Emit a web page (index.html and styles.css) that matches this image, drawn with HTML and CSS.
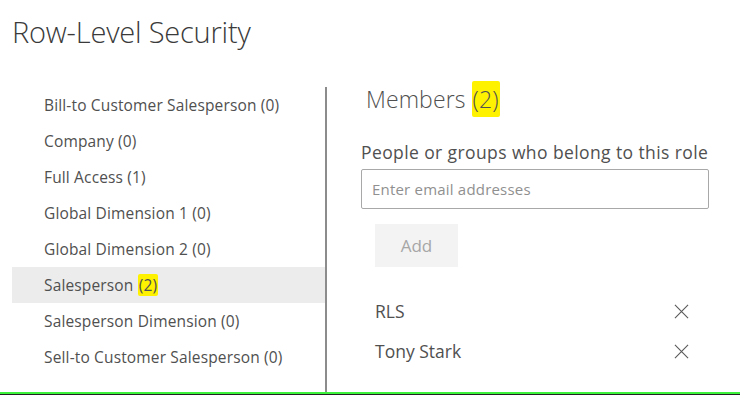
FILE: index.html
```html
<!DOCTYPE html>
<html lang="en">
<head>
<meta charset="utf-8">
<title>Row-Level Security</title>
<link rel="stylesheet" href="styles.css">
</head>
<body>
<header class="page-header">
  <h1 class="page-title">Row-Level Security</h1>
</header>
<main class="main">
  <nav class="roles">
    <ul class="role-list">
      <li class="role">Bill-to Customer Salesperson (0)</li>
      <li class="role">Company (0)</li>
      <li class="role">Full Access (1)</li>
      <li class="role">Global Dimension 1 (0)</li>
      <li class="role">Global Dimension 2 (0)</li>
      <li class="role role-selected">Salesperson <span class="hl">(2)</span></li>
      <li class="role">Salesperson Dimension (0)</li>
      <li class="role">Sell-to Customer Salesperson (0)</li>
    </ul>
  </nav>
  <section class="members">
    <h2 class="members-title">Members <span class="hl">(2)</span></h2>
    <label class="field-label" for="email">People or groups who belong to this role</label>
    <input class="email-input" id="email" type="text" placeholder="Enter email addresses">
    <button class="add-btn" type="button">Add</button>
    <ul class="member-list">
      <li class="member"><span class="member-name">RLS</span>
        <svg class="remove" viewBox="0 0 16 16" width="16" height="16"><path d="M1 1L15 15M15 1L1 15" stroke="#5a5a5a" stroke-width="1.2" fill="none"/></svg>
      </li>
      <li class="member"><span class="member-name">Tony Stark</span>
        <svg class="remove" viewBox="0 0 16 16" width="16" height="16"><path d="M1 1L15 15M15 1L1 15" stroke="#5a5a5a" stroke-width="1.2" fill="none"/></svg>
      </li>
    </ul>
  </section>
</main>
<footer class="bottom-bar"></footer>
</body>
</html>
```

FILE: styles.css
```css
html, body {
  margin: 0;
  padding: 0;
}
body {
  width: 740px;
  height: 395px;
  overflow: hidden;
  display: flex;
  flex-direction: column;
  background: #ffffff;
  font-family: "Open Sans", "Noto Sans", sans-serif;
  color: #4a4a4a;
}
.page-header {
  height: 87px;
  flex: none;
  padding-left: 12px;
  box-sizing: border-box;
  padding-top: 14px;
}
.page-title {
  margin: 0;
  font-size: 29px;
  font-weight: 300;
  line-height: 36px;
  color: #3a3a3a;
  letter-spacing: -0.2px;
}
.main {
  flex: 1;
  display: flex;
  min-height: 0;
}
.roles {
  margin-left: 12px;
  width: 313px;
  flex: none;
}
.role-list {
  list-style: none;
  margin: 0;
  padding: 0;
}
.role {
  height: 36px;
  line-height: 36px;
  padding-left: 32px;
  font-size: 15.5px;
  letter-spacing: 0.15px;
  color: #505050;
  white-space: nowrap;
}
.role-selected {
  background: #ececec;
}
.hl {
  background: #fff200;
  border-radius: 2px;
  padding: 0 1px;
}
.members {
  flex: 1;
  border-left: 2px solid #8c8c8c;
  padding-left: 34px;
  display: flex;
  flex-direction: column;
  align-items: flex-start;
}
.members-title {
  margin: 0 0 0 5px;
  font-size: 23px;
  font-weight: 300;
  line-height: 24px;
  color: #505050;
  letter-spacing: 0.1px;
}
.members-title .hl {
  padding: 2px 1px;
}
.field-label {
  margin-top: 30px;
  font-size: 17.5px;
  line-height: 22px;
  letter-spacing: 0.4px;
  color: #505050;
  white-space: nowrap;
}
.email-input {
  margin-top: 6px;
  width: 348px;
  height: 40px;
  box-sizing: border-box;
  border: 1px solid #a8a8a8;
  border-radius: 2px;
  padding: 0 10px;
  font-family: inherit;
  font-size: 15px;
  letter-spacing: 0.2px;
  color: #444;
  outline: none;
}
.email-input::placeholder {
  color: #909090;
}
.add-btn {
  margin-top: 15px;
  margin-left: 14px;
  width: 83px;
  height: 43px;
  border: none;
  background: #f3f3f3;
  color: #a6a6a6;
  font-family: inherit;
  font-size: 17px;
  padding: 0;
}
.member-list {
  list-style: none;
  margin: 24px 0 0 14px;
  padding: 0;
  width: 320px;
}
.member {
  height: 40px;
  display: flex;
  align-items: center;
  justify-content: space-between;
  padding-right: 6px;
}
.member-name {
  font-size: 17.5px;
  color: #505050;
}
.remove {
  width: 15px;
  height: 15px;
}
.bottom-bar {
  flex: none;
  height: 3px;
  background: #3cf23a;
  border-bottom: 1px solid #222;
  box-sizing: border-box;
}
```
